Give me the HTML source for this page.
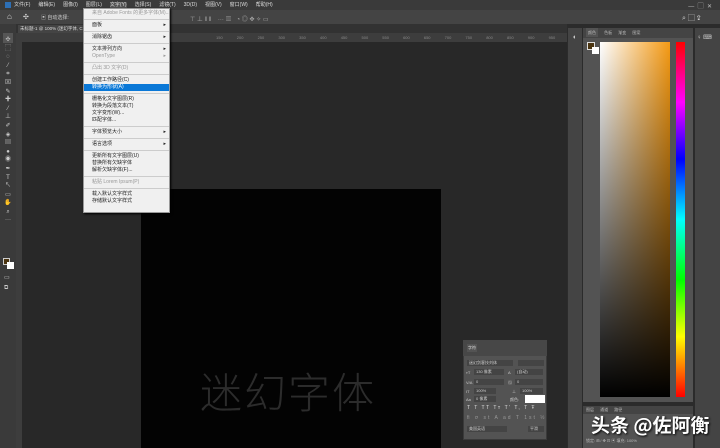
<!DOCTYPE html>
<html><head><meta charset="utf-8"><style>
*{margin:0;padding:0;box-sizing:border-box}
body{width:720px;height:448px;overflow:hidden;background:#282828;font-family:"Liberation Sans","Noto Sans CJK SC",sans-serif;position:relative;font-size:5px;color:#ccc}
.a{position:absolute;white-space:nowrap}
.menu span{margin-right:8px}
.dd div{height:7px;line-height:7px;padding-left:8px;font-size:5px;color:#222;white-space:nowrap;position:relative}
.dd .sep{height:3px;border-bottom:1px solid #ccc;margin-bottom:2px}
.dd .g{color:#999}
.dd .ar:after{content:"▸";position:absolute;right:3px;font-size:5px}
.f{background:#444;height:6px;font-size:4px;color:#ccc;line-height:6px;padding-left:2px}
</style></head><body>
<div class="a menu" style="left:0;top:0;width:720px;height:10px;background:#3a3a3a;padding-left:14px;line-height:10px;font-size:5px;color:#ddd">
<span>文件(F)</span><span>编辑(E)</span><span>图像(I)</span><span>图层(L)</span><span style="background:#555">文字(Y)</span><span>选择(S)</span><span>滤镜(T)</span><span>3D(D)</span><span>视图(V)</span><span>窗口(W)</span><span>帮助(H)</span></div>
<div class="a" style="left:5px;top:2px;width:6px;height:6px;background:#2d6fb5"></div>
<div class="a" style="right:8px;top:1px;color:#bbb;font-size:6px">—&nbsp;&nbsp;▢&nbsp;&nbsp;✕</div>
<div class="a" style="left:0;top:10px;width:720px;height:14px;background:#444"></div>
<div class="a" style="left:7px;top:12px;color:#ddd;font-size:8px">⌂</div>
<div class="a" style="left:23px;top:13px;color:#ddd;font-size:7px">✣</div>
<div class="a" style="left:41px;top:14px;color:#ccc;font-size:5px">▣ 自动选择:</div>
<div class="a" style="left:190px;top:14px;color:#aaa;font-size:6px">⊤ ⊥ ‖ ‖ &nbsp;&nbsp; ··· ▥ &nbsp; ◔ ◎ ✥ ✧ ▭</div>
<div class="a" style="left:682px;top:13px;color:#ccc;font-size:7px">⌕ ▢ ⇪</div>
<div class="a" style="left:16px;top:24px;width:551px;height:9px;background:#323232"></div>
<div class="a" style="left:18px;top:25px;width:68px;height:8px;background:#444;color:#ddd;font-size:4.5px;line-height:8px;padding-left:2px;overflow:hidden">未标题-1 @ 100% (迷幻字体, CMYK</div>
<div class="a" style="left:16px;top:33px;width:551px;height:9px;background:#3d3d3d;color:#888;font-size:4px;line-height:9px;word-spacing:13px;padding-left:200px;overflow:hidden">150 200 250 300 350 400 450 500 550 600 650 700 750 800 850 900 950 1000 1050</div>
<div class="a" style="left:16px;top:42px;width:6px;height:406px;background:#3d3d3d"></div>
<div class="a" style="left:0;top:24px;width:16px;height:424px;background:#3a3a3a"></div>
<div class="a" style="left:3px;top:33px;width:10px;height:10px;background:#555"></div>
<div class="a" style="left:4px;top:36px;color:#ccc;font-size:6px;line-height:8.6px;text-align:center;width:8px;white-space:normal">✣<br>⬚<br>◌<br>⁄<br>⌗<br>⊠<br>✎<br>✚<br>⁄<br>⊥<br>✐<br>◈<br>▤<br>●<br>◉<br>✒<br>T<br>↖<br>▭<br>✋<br>⌕<br>···</div>
<div class="a" style="left:3px;top:258px;width:7px;height:7px;background:#4a3410;border:1px solid #ccc"></div>
<div class="a" style="left:7px;top:262px;width:7px;height:7px;background:#fff"></div>
<div class="a" style="left:4px;top:273px;color:#ccc;font-size:6px;line-height:10px;white-space:normal">▭<br>⧉</div>
<div class="a" style="left:141px;top:189px;width:300px;height:259px;background:#030303"></div>
<div class="a" style="left:200px;top:360px;color:#2c2c2c;font-size:42px;letter-spacing:2px;font-family:'Noto Sans CJK SC',sans-serif;font-weight:300">迷幻字体</div>
<div class="a dd" style="left:83px;top:8px;width:87px;height:205px;background:#f0f0f0;border:1px solid #999;box-shadow:1px 1px 2px #000;padding-top:1px">
<div class="g">来自 Adobe Fonts 的更多字体(M)...</div><div class="sep"></div>
<div class="ar">面板</div><div class="sep"></div>
<div class="ar">消除锯齿</div><div class="sep"></div>
<div class="ar">文本排列方向</div><div class="g ar">OpenType</div><div class="sep"></div>
<div class="g">凸出 3D 文字(D)</div><div class="sep"></div>
<div>创建工作路径(C)</div><div style="background:#0a78d7;color:#fff">转换为形状(A)</div><div class="sep"></div>
<div>栅格化文字图层(R)</div><div>转换为段落文本(T)</div><div>文字变形(W)...</div><div>匹配字体...</div><div class="sep"></div>
<div class="ar">字体预览大小</div><div class="sep"></div>
<div class="ar">语言选项</div><div class="sep"></div>
<div>更新所有文字图层(U)</div><div>替换所有欠缺字体</div><div>解析欠缺字体(F)...</div><div class="sep"></div>
<div class="g">粘贴 Lorem Ipsum(P)</div><div class="sep"></div>
<div>载入默认文字样式</div><div>存储默认文字样式</div>
</div>
<div class="a" style="left:567px;top:24px;width:153px;height:424px;background:#2b2b2b"></div>
<div class="a" style="left:568px;top:28px;width:14px;height:420px;background:#444"></div>
<div class="a" style="left:572px;top:34px;color:#ccc;font-size:7px">◖</div>
<div class="a" style="left:583px;top:28px;width:110px;height:374px;background:#535353"></div>
<div class="a" style="left:583px;top:28px;width:110px;height:10px;background:#444;font-size:4px;color:#bbb;line-height:10px;padding-left:3px;word-spacing:5px"><span style="background:#535353;padding:2px">颜色</span> 色板 渐变 图案</div>
<div class="a" style="left:587px;top:42px;width:8px;height:8px;background:#4a3410;border:1px solid #ddd"></div>
<div class="a" style="left:592px;top:47px;width:7px;height:7px;background:#fff"></div>
<div class="a" style="left:600px;top:42px;width:70px;height:355px;background:linear-gradient(to bottom,rgba(0,0,0,0),#000),linear-gradient(to right,#fff,#f59a14)"></div>
<div class="a" style="left:676px;top:42px;width:9px;height:355px;background:linear-gradient(to bottom,#f00 0%,#f0f 17%,#00f 33%,#0ff 50%,#0f0 67%,#ff0 83%,#f00 100%)"></div>
<div class="a" style="left:695px;top:28px;width:25px;height:420px;background:#444"></div>
<div class="a" style="left:697px;top:34px;color:#ccc;font-size:6px">♀ ⌨</div>
<div class="a" style="left:583px;top:406px;width:110px;height:42px;background:#535353"></div>
<div class="a" style="left:583px;top:406px;width:110px;height:8px;background:#444;font-size:4px;color:#bbb;line-height:8px;padding-left:3px;word-spacing:5px">图层 通道 路径</div>
<div class="a" style="left:586px;top:438px;font-size:4px;color:#bbb">锁定: ⊞ ⁄ ✥ ⊡ ▣ 填充: 100%</div>
<!-- character panel -->
<div class="a" style="left:463px;top:340px;width:84px;height:100px;background:#535353;border:1px solid #3a3a3a"></div>
<div class="a" style="left:463px;top:340px;width:84px;height:16px;background:#474747"></div>
<div class="a" style="left:467px;top:344px;font-size:4px;color:#ddd;background:#535353;padding:1px">字符</div>
<div class="a f" style="left:467px;top:360px;width:46px">迷幻剑客技刘体</div>
<div class="a f" style="left:518px;top:360px;width:26px"></div>
<div class="a" style="left:466px;top:370px;font-size:4px;color:#ccc">ᴛT</div><div class="a f" style="left:474px;top:369px;width:30px">130 像素</div>
<div class="a" style="left:508px;top:370px;font-size:4px;color:#ccc">A</div><div class="a f" style="left:515px;top:369px;width:28px">(自动)</div>
<div class="a" style="left:466px;top:380px;font-size:4px;color:#ccc">V/A</div><div class="a f" style="left:474px;top:379px;width:30px">0</div>
<div class="a" style="left:508px;top:380px;font-size:4px;color:#ccc">▨</div><div class="a f" style="left:515px;top:379px;width:28px">0</div>
<div class="a" style="left:466px;top:389px;font-size:4px;color:#ccc">IT</div><div class="a f" style="left:474px;top:388px;width:22px">100%</div>
<div class="a" style="left:512px;top:389px;font-size:4px;color:#ccc">⊥</div><div class="a f" style="left:520px;top:388px;width:23px">100%</div>
<div class="a" style="left:466px;top:397px;font-size:4px;color:#ccc">Aa</div><div class="a f" style="left:474px;top:396px;width:22px">0 像素</div>
<div class="a" style="left:510px;top:397px;font-size:4px;color:#ccc">颜色:</div>
<div class="a" style="left:525px;top:395px;width:20px;height:8px;background:#fff"></div>
<div class="a" style="left:467px;top:405px;font-size:5px;color:#ddd;letter-spacing:1.5px">T T TT Tт T' T, T Ŧ</div>
<div class="a" style="left:467px;top:415px;font-size:5px;color:#999;letter-spacing:2px">ﬁ ơ st A ad T 1st ½</div>
<div class="a f" style="left:467px;top:426px;width:40px">美国英语</div>
<div class="a f" style="left:528px;top:426px;width:16px">平滑</div>
<div class="a" style="left:591px;top:411px;font-size:19px;color:#fff;font-weight:bold;text-shadow:1px 1px 2px #000;font-family:'Noto Sans CJK SC',sans-serif">头条 @佐阿衡</div>
</body></html>
